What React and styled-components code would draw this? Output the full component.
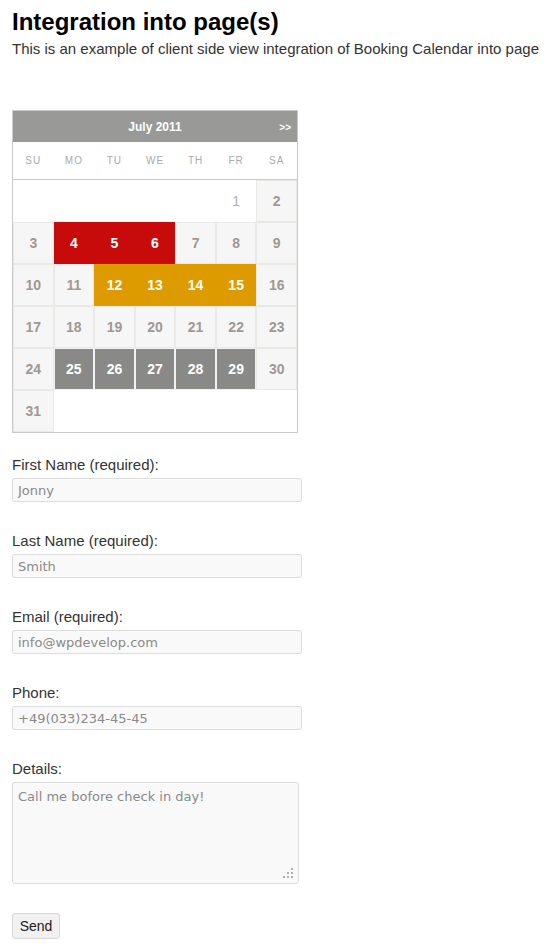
import React from "react";
import styled, { createGlobalStyle } from "styled-components";

const GlobalStyle = createGlobalStyle`
  html, body { margin: 0; padding: 0; background: #fff; }
  body { font-family: "Liberation Sans", Arial, sans-serif; color: #333; }
`;

const Page = styled.div`
  padding: 8px 12px 0;
  width: 521px;
`;

const Title = styled.h1`
  margin: 0;
  font-size: 24px;
  line-height: 28px;
  font-weight: bold;
  color: #000;
`;

const Subtitle = styled.p`
  margin: 4px 0 0;
  font-size: 15px;
  line-height: 17px;
  color: #333;
  white-space: nowrap;
`;

const Calendar = styled.div`
  margin-top: 53px;
  width: 286px;
  box-sizing: border-box;
  border: 1px solid #cacaca;
  background: #fff;
`;

const CalHeader = styled.div`
  position: relative;
  height: 31px;
  background: #999a98;
  display: flex;
  align-items: center;
  justify-content: center;
  color: #fff;
  font-weight: bold;
  font-size: 12px;
`;

const NextLink = styled.span`
  position: absolute;
  right: 6px;
  top: 11px;
  font-size: 10px;
  font-weight: bold;
  color: #fff;
`;

const DayNames = styled.div`
  display: grid;
  grid-template-columns: repeat(7, 1fr);
  height: 37px;
  border-bottom: 1px solid #cacaca;
  align-items: center;
`;

const DayName = styled.div`
  text-align: center;
  font-size: 10px;
  color: #aaa;
  letter-spacing: 1px;
`;

const Grid = styled.div`
  display: grid;
  grid-template-columns: repeat(7, 1fr);
  grid-auto-rows: 42px;
`;

const cellStyles = {
  normal: { bg: "#f7f6f6", border: "#ebe9e6", color: "#a09893" },
  red: { bg: "#c70b0b", border: "#c70b0b", color: "#fff" },
  orange: { bg: "#de9b00", border: "#de9b00", color: "#fff" },
  gray: { bg: "#898a87", border: "#f2f2f2", color: "#fff" },
  past: { bg: "#fff", border: "#fff", color: "#b3aca8" },
  empty: { bg: "#fff", border: "#fff", color: "#fff" },
};

const Cell = styled.div`
  box-sizing: border-box;
  display: flex;
  align-items: center;
  justify-content: center;
  font-size: 14px;
  font-weight: ${(p) => (p.$kind === "past" ? "normal" : "bold")};
  background: ${(p) => cellStyles[p.$kind].bg};
  border: 1px solid ${(p) => cellStyles[p.$kind].border};
  color: ${(p) => cellStyles[p.$kind].color};
`;

const Form = styled.div`
  margin-top: 23px;
  display: flex;
  flex-direction: column;
`;

const Field = styled.div`
  display: flex;
  flex-direction: column;
  gap: 5px;
  margin-bottom: ${(p) => (p.$last ? "29px" : "30px")};
`;

const Label = styled.label`
  font-size: 15px;
  line-height: 17px;
  color: #333;
`;

const Input = styled.input`
  box-sizing: border-box;
  width: 290px;
  height: 24px;
  padding: 0 5px;
  border: 1px solid #dcdcdc;
  border-radius: 3px;
  background: #f9f9f9;
  font-family: "DejaVu Sans", Verdana, sans-serif;
  font-size: 13px;
  color: #888;
  outline: none;
  &::placeholder { color: #8a8a8a; }
`;

const AreaWrap = styled.div`
  position: relative;
  width: 287px;
  height: 102px;
`;

const TextArea = styled.textarea`
  box-sizing: border-box;
  width: 287px;
  height: 102px;
  padding: 6px 5px;
  border: 1px solid #dcdcdc;
  border-radius: 3px;
  background: #f9f9f9;
  font-family: "DejaVu Sans", Verdana, sans-serif;
  font-size: 13px;
  line-height: 15px;
  color: #888;
  outline: none;
  resize: none;
  display: block;
  &::placeholder { color: #8a8a8a; }
`;

const Grip = styled.svg`
  position: absolute;
  right: 6px;
  bottom: 6px;
  width: 10px;
  height: 10px;
  pointer-events: none;
`;

const SendButton = styled.button`
  align-self: flex-start;
  box-sizing: border-box;
  width: 48px;
  height: 26px;
  padding: 0;
  border: 1px solid #d8d8d8;
  border-radius: 3px;
  background: #f1f1f1;
  font-family: "Liberation Sans", Arial, sans-serif;
  font-size: 14px;
  color: #222;
`;

const dayNames = ["SU", "MO", "TU", "WE", "TH", "FR", "SA"];

function kindFor(d) {
  if (d === null) return "empty";
  if (d === 1) return "past";
  if (d >= 4 && d <= 6) return "red";
  if (d >= 12 && d <= 15) return "orange";
  if (d >= 25 && d <= 29) return "gray";
  return "normal";
}

const days = [];
for (let i = 0; i < 5; i++) days.push(null);
for (let d = 1; d <= 31; d++) days.push(d);
while (days.length % 7) days.push(null);

const fields = [
  { label: "First Name (required):", ph: "Jonny" },
  { label: "Last Name (required):", ph: "Smith" },
  { label: "Email (required):", ph: "info@wpdevelop.com" },
  { label: "Phone:", ph: "+49(033)234-45-45" },
];

const gripDots = [
  [8, 0],
  [4, 4],
  [8, 4],
  [0, 8],
  [4, 8],
  [8, 8],
];

export default function App() {
  return (
    <>
      <GlobalStyle />
      <Page>
        <Title>Integration into page(s)</Title>
        <Subtitle>
          This is an example of client side view integration of Booking Calendar into page
        </Subtitle>
        <Calendar>
          <CalHeader>
            July 2011
            <NextLink>&gt;&gt;</NextLink>
          </CalHeader>
          <DayNames>
            {dayNames.map((n) => (
              <DayName key={n}>{n}</DayName>
            ))}
          </DayNames>
          <Grid>
            {days.map((d, i) => (
              <Cell key={i} $kind={kindFor(d)}>
                {d}
              </Cell>
            ))}
          </Grid>
        </Calendar>
        <Form>
          {fields.map((f) => (
            <Field key={f.label}>
              <Label>{f.label}</Label>
              <Input placeholder={f.ph} />
            </Field>
          ))}
          <Field $last>
            <Label>Details:</Label>
            <AreaWrap>
              <TextArea placeholder="Call me bofore check in day!" />
              <Grip viewBox="0 0 10 10">
                {gripDots.map(([x, y], i) => (
                  <rect key={i} x={x} y={y} width="2" height="2" fill="#b0b0b0" />
                ))}
              </Grip>
            </AreaWrap>
          </Field>
          <SendButton>Send</SendButton>
        </Form>
      </Page>
    </>
  );
}
